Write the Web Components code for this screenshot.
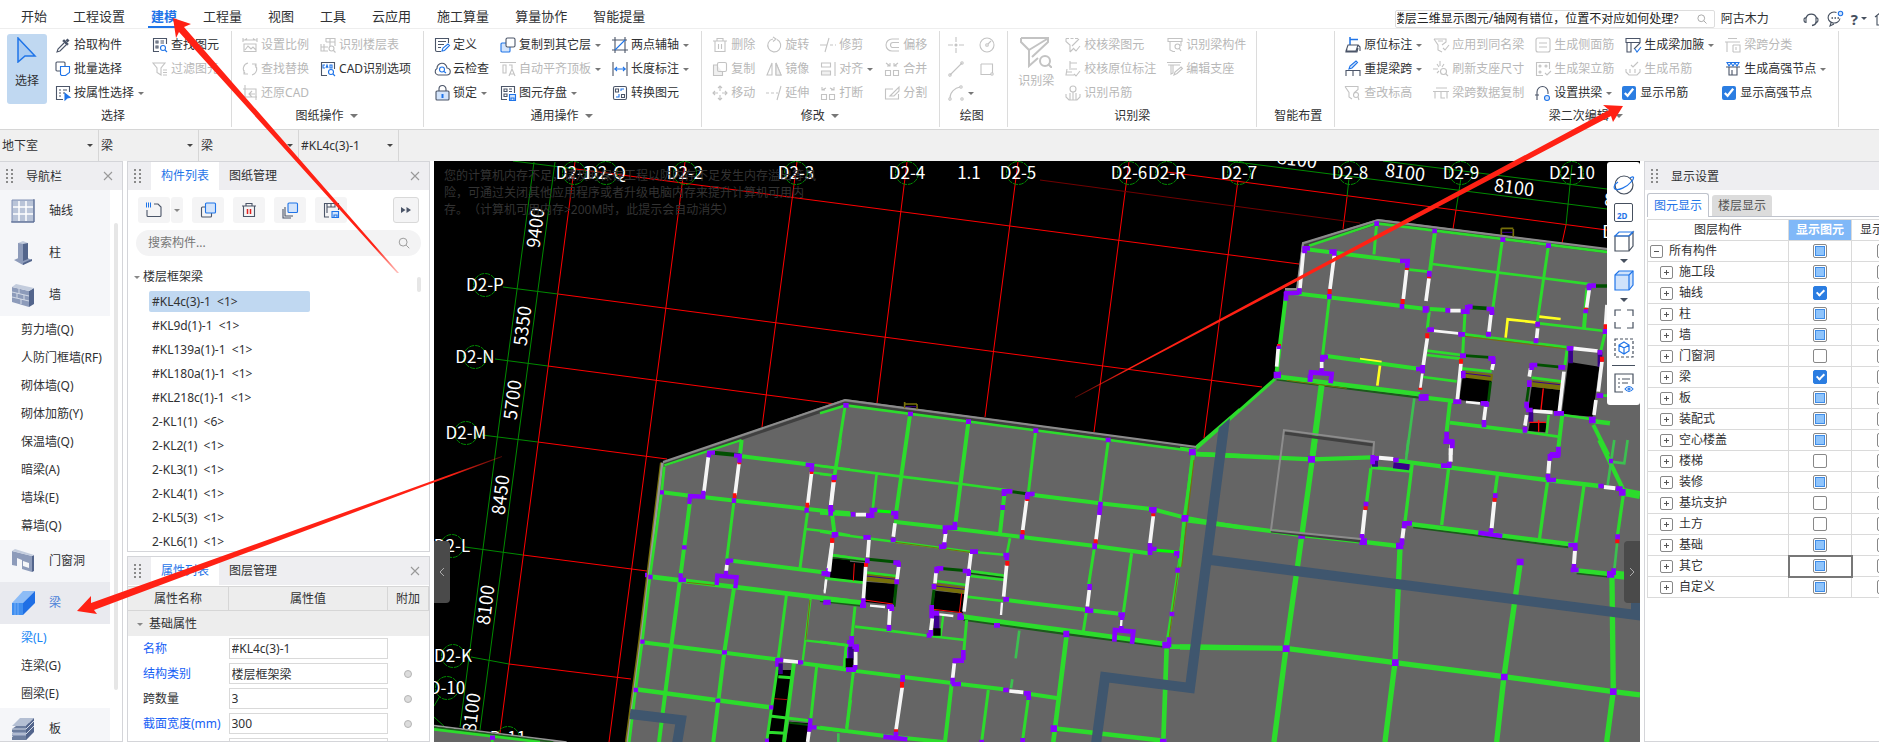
<!DOCTYPE html>
<html lang="zh-CN">
<head>
<meta charset="utf-8">
<title>建模</title>
<style>
  html, body {
    height: 100%;
    margin: 0;
  }

  body {
    background: #fff;
    color: #303133;
    font: 12px/16px "Noto Sans", "Noto Sans CJK SC", sans-serif;
    overflow: hidden;
  }
</style>
</head>
<body>
<model-app></model-app>

<script>
// app-icon.js

// 16x16 line icons, class "a" takes the accent colour, "f" a light fill
const ICONS = {
  picker: '<path fill="currentColor" d="M9 3l4 4-1 1-4-4z"/><path stroke-width="3" d="M11.500 4.500l2-2"/><path d="M9 6l-6 6-1 3 3-1 6-6"/>',
  batch: '<rect x="1" y="1" width="9" height="9" rx="1"/><path class="a" fill="#fff" d="M5.500 5.500h9v6l-4 3h-4l-1-1z"/>',
  byattr: '<path d="M8 14.500H1.500v-13h13V7M4 5h2M8 5h4M4 8h2M8 8h2M4 11h2"/><path class="a" fill="var(--accent, #1f74e8)" d="M10 8.500l5 4-3 .5-2 2z"/>',
  find: '<path d="M7 14.500H1.500v-13h13V7M4 4h2v2H4zM4 9h2v2H4zM8.500 4H12M8.500 6H12"/><circle class="a" cx="11" cy="11" r="2.500"/><path class="a" d="M13 13l2 2"/>',
  filter: '<path d="M1 2h12L9 7v7l-4-2.500V7zM11 9h4M11 11.500h4M11 14h4"/>',
  scale: '<path d="M1 1v4M15 1v4M1 3h14M3 3l2-1.500M13 3l-2-1.500M2 7h12v7.500H2zM3 13l3-4 3 3 2-2 3 3"/>',
  swap: '<path d="M6 2a6 6 0 0 0-3 10M2 9v4h4M10 14a6 6 0 0 0 3-10M14 7V3h-4"/>',
  cadback: '<path d="M3 0v12h12M1 4h13v8M14 12v3M10 6L7 9l3 3M7 9h6"/>',
  floors: '<path d="M6 5V1.500h9V9M6 5h9M10 1.500V9M1 7v7h7M4 7v7M1 10h7"/><circle cx="11.500" cy="11.500" r="2.500"/><path d="M13.500 13.500l2 2"/>',
  cad: '<path d="M7 14.500H1.500v-13h13V8"/><path class="a" d="M5 4H3v3h2M6 7l1-3 1 3M10 4v3h2V4z"/><circle class="a" cx="11" cy="11" r="2.500"/><path class="a" d="M13 13l2 2"/>',
  define: '<path d="M7 14.500H3a1.500 1.500 0 0 1-1.500-1.500V1.500h13V6M4 4.500h8M4 7.500h6M4 10.500h3"/><path class="a" d="M8 14l1-3 5-4 1.500 1.500-5 5z"/>',
  cloud: '<path d="M4 14a3.500 3.500 0 0 1-1-6.500A5 5 0 0 1 13 7a3.500 3.500 0 0 1-.5 7z"/><circle class="a" cx="8" cy="8.500" r="2.500"/><path class="a" d="M10 10.500l2 1.500"/>',
  lock: '<rect class="f" x="2" y="6" width="13" height="9" rx="1"/><path d="M5 6V4a3.500 3.500 0 0 1 7 0v2"/><path class="a" stroke-width="2" d="M8.500 9v4"/>',
  copyto: '<rect class="a f" x="1" y="6" width="9" height="9" rx="1"/><rect x="6" y="1" width="9" height="9" rx="1.500" fill="#fff"/>',
  alignslab: '<path d="M0 1.500h16M3 4h3v8H3zM9 4h3v3"/><path d="M9 15l3-7 3 7M10 13h4"/>',
  store: '<path d="M7 14.500H1.500v-13h13V8M4 4h3v2.500H4zM4 9h3v2.500H4zM9 4h3M9 6.500h3"/><path class="a f" d="M9.500 9.500h6v6h-6zM11 15v-2h3v2"/>',
  axis: '<path d="M3 0v16M0 3h15M13 0v16M0 13h16"/><path class="a" d="M3 13L13 3"/>',
  dim: '<path d="M1 1v14M15 1v14"/><path class="a" d="M2 8h12M5 6L3 8l2 2M11 6l2 2-2 2"/>',
  convert: '<rect x="1.500" y="1.500" width="13" height="13" rx="1.500"/><path d="M3.500 4h3v3h-3zM9.500 9.500h3v3h-3z"/><path class="a" d="M12 4H9v2M4 12h3v-3"/>',
  trash: '<path d="M1 4h14M5 4V1.500h6V4M3 4v10.500h10V4M6.500 7v5M9.500 7v5"/>',
  copy: '<path class="f" d="M5 4H1.500v10.500h9V11"/><rect x="5.500" y="1.500" width="9" height="9" rx="1.500"/>',
  move: '<path d="M8 1v5M8 10v5M1 8h5M10 8h5M6 3l2-2 2 2M6 13l2 2 2-2M3 6L1 8l2 2M13 6l2 2-2 2"/>',
  rotate: '<path d="M7 2a6.500 6.500 0 1 0 4 .5M7 0l3 2-3 2.500"/>',
  mirror: '<path d="M6 2v12H1zM10 2l5 12h-5z"/><path class="f" d="M10 2l5 12h-5z"/>',
  extend: '<path stroke-dasharray="3 2" d="M0 8h10"/><path d="M10 8h2M15 1l-4 14"/>',
  trim: '<path d="M0 8h7M9 1L5 15"/><path stroke-dasharray="3 2" d="M10 8h6"/>',
  align: '<path d="M15 1v14M1.500 2h9v4h-9z"/><path class="f" d="M1.500 10h9v4h-9z"/>',
  split: '<path d="M1.500 9.500h5v5h-5zM9.500 9.500h5v5h-5zM6 3L2 5M2 2v3h3M10 3l4 2M14 2v3h-3"/>',
  offset: '<path d="M15 2H8a6 6 0 0 0 0 12h7M15 5.500H9a2.500 2.500 0 0 0 0 5h6"/>',
  merge: '<path d="M1.500 9.500h5v5h-5zM9.500 9.500h5v5h-5zM2 2l4 3M6 2v3H3M14 2l-4 3M10 2v3h3"/>',
  cut: '<path d="M9 4H1.500v10h13V9M6 11l9-9v4l-5 5z"/>',
  point: '<path d="M8 0v5M8 11v5M0 8h5M11 8h5"/><circle cx="8" cy="8" r="1" fill="currentColor"/>',
  line: '<path d="M2 14L14 2"/><circle cx="2" cy="14" r="1.200"/><circle cx="14" cy="2" r="1.200"/>',
  arc: '<path d="M2 13C2 7 7 3 12 2"/><circle cx="2" cy="14" r="1.200"/><circle cx="13" cy="2" r="1.200"/><circle cx="14" cy="14" r="1.200"/>',
  circle: '<circle cx="8" cy="8" r="7"/><circle cx="8" cy="8" r="1.300"/><path d="M9 7l3-3"/>',
  rect: '<path d="M2 3h11.500v9M12 13.500H2V3"/><circle cx="13" cy="13" r="1.200"/>',
  chkbeam: '<path stroke-dasharray="3 1.500" d="M1 1.500h13"/><path d="M1 1.500v3L5 8v7M14 2L7 9M5 15l4-4M9 12l2 2 4-5"/>',
  chkpos: '<path d="M5 0v7M5 2h7M4 8h8M2 8l-1 6h8M9 13l2 2 4-5M1 11h6"/>',
  hang: '<circle cx="8" cy="4" r="3"/><path d="M8 7v8M1 9v3l3 3h8l3-3V9M5 8v7M11 8v7"/>',
  beamid: '<path d="M1 1.500h14v3H1zM3 4v9l3 1.500h2"/><circle cx="10.500" cy="9.500" r="2.500"/><path d="M12 11l2 3M14 5v4"/>',
  support: '<path d="M0 1.500h14M1 4h12M4 4v9l2-1V4"/><path d="M7 14l1-3 6-5 1.500 1.500-5.500 5z"/>',
  orig: '<path class="a" stroke-width="1.500" d="M5 0v8M5 2.500h8"/><path d="M3 8h10l-2 6H1zM13 8l2 2v4M2 12l-1 3h11l1-4"/>',
  respan: '<path class="a f" d="M4 8l1-3 6-5 1.500 1.500L7 7z"/><path d="M1 15V9.500h14V15M8 9.500V15"/>',
  chkh: '<path d="M0 1.500h13v3L9 8M0 1.500l4 6V12l3 2"/><circle cx="11" cy="10" r="2.500"/><path d="M13 12l1 3"/>',
  apply: '<path d="M1 2h12v3l-4 3M1 2l4 6v5l4 2M5 4h5M10 11l2 2 4-5"/>',
  refresh: '<path d="M0 8h5M7 0v5M4 3l2 3M11 3L9 6"/><circle cx="10.500" cy="10.500" r="3"/><path d="M13 13l2 2M4 12l2-2"/>',
  spancopy: '<path d="M3 3h11M0 6.500h16M2 6.500v7M8 6.500v7M14 6.500v7M8 13h4"/>',
  side: '<rect x="1" y="1" width="14" height="14" rx="2"/><path d="M4 6h8M4 10h8"/>',
  erect: '<path d="M8 14.500H1.500v-13h13V8"/><circle cx="5" cy="5" r="1"/><circle cx="11" cy="5" r="1"/><circle cx="5" cy="11" r="1"/><path d="M10 12l2 2 4-4"/>',
  arch: '<path d="M2 15V7a5.500 5.500 0 0 1 11 0v2M0 10h4"/><circle class="a f" cx="12" cy="13" r="2.500"/>',
  haunch: '<path d="M1 1.500h14v4H1zM2 6v9h4V6M15 6L9 12"/><path class="a" d="M10 12l2 3 4-5"/>',
  genhang: '<path d="M1 8v3l3 3h8l3-3V8M5 8v4M10 8v4M6 4l2 2 5-5"/>',
  classify: '<path d="M3 1.500h9M0 5h15M2 5v10M8 8v7M8 8h7v7H8M11 10v3"/>',
  strong: '<path d="M1 6h14M4 6v8h8V6M7 9v5"/><path class="a" d="M2 1.500h12L12 5 10 2 8 5 6 2 4 5z"/>',
  search: '<circle cx="7" cy="7" r="4.500"/><path d="M10.500 10.500L14 14"/>',
  headset: '<path stroke-width="1.300" d="M3 7a5.500 5.500 0 0 1 10.500 0M13.500 11q-1 3-4.500 3.500"/><path d="M3 7v4.500q-2 0-2-2.500t2-2M13 7v4.500q2 0 2-2.500t-2-2"/>',
  smile: '<path d="M9.500 1.500A6 5.500 0 1 0 13 7.500M4 12l-1 3 4-2"/><circle class="a f" cx="13.500" cy="2.500" r="2.200"/><path stroke-width="1.500" d="M4.500 7H6M7.500 7H9M10.500 7H12"/>',
  home: '<path d="M0 6l5-4 5 4M2 5v9h8"/>',
  newfile: '<path d="M8 2h4l3 3v8.500q0 1-1 1H2q-1 0-1-1V8"/><path class="a" stroke-width="5" stroke-dasharray="1 1" d="M0 3h5"/>',
  dup: '<path d="M5 5H2.500q-1 0-1 1v8q0 1 1 1h8q1 0 1-1v-3"/><rect class="a f" x="5.500" y="1" width="10" height="10" rx="1"/>',
  del: '<path d="M1 4h14M5 4V1.500h6V4M2.500 4v10.500h11V4"/><path stroke="#e02020" stroke-width="1.500" d="M6.500 7v5M9.500 7v5"/>',
  layers: '<path d="M3 5v9h8M1 7v9h8"/><rect class="a f" x="6" y="1" width="9.500" height="9.500" rx="1"/>',
  save: '<path d="M6 15H1.500V1.500h14V8M4 1.500V11M4 5h8V2M8 5V2"/><path class="a f" d="M9 9.500h6.500v6H9zM11 15v-2h3v2"/>',
  more: '<path fill="currentColor" stroke="none" d="M3 5l4.500 3L3 11zM8.500 5L13 8l-4.500 3z"/>',
  close: '<path d="M4 4l8 8M12 4l-8 8"/>'
};

class AppIcon extends HTMLElement {
  connectedCallback() {
    var name = this.getAttribute("name");
    this.attachShadow({ mode: "open" });
    this.shadowRoot.innerHTML = `
      <svg viewBox="0 0 16 16" aria-hidden="true">${ICONS[name]}</svg>
      <style>
        :host {
          display: block;
          flex: none;
          height: 16px;
          width: 16px;
        }

        svg {
          display: block;
          fill: none;
          height: 100%;
          overflow: visible;
          stroke: currentColor;
          stroke-width: 1.1;
          width: 100%;
        }

        .a {
          stroke: var(--accent, #1f74e8);
        }

        .f {
          fill: var(--soft, #d3e4fb);
        }
      </style>
    `;
  }
}

customElements.define("app-icon", AppIcon);

// menu-bar.js

class MenuBar extends HTMLElement {
  connectedCallback() {
    var items = ["开始", "工程设置", "建模", "工程量", "视图", "工具", "云应用", "施工算量", "算量协作", "智能提量"];
    this.attachShadow({ mode: "open" });
    this.shadowRoot.innerHTML = `
      <nav>
        ${items.map((t) => `<a href="#"${t == "建模" ? ' class="on"' : ""}>${t}</a>`).join("")}
      </nav>
      <div class="right">
        <label class="find">
          <input aria-label="搜索" value="楼层三维显示图元/轴网有错位，位置不对应如何处理?">
          <app-icon name="search"></app-icon>
        </label>
        <span class="user">阿古木力</span>
        <button aria-label="客服"><app-icon name="headset"></app-icon></button>
        <button aria-label="反馈"><app-icon name="smile"></app-icon></button>
        <button class="help">?<i></i></button>
        <app-icon class="last" name="home"></app-icon>
      </div>
      <style>
        :host {
          border-bottom: 1px solid #eee;
          display: flex;
          flex: none;
          height: 28px;
          justify-content: space-between;
          overflow: hidden;
        }

        nav {
          display: flex;
          font-size: 13px;
          gap: 20px;
          padding-left: 18px;
        }

        a {
          border-bottom: 2px solid transparent;
          box-sizing: border-box;
          color: #303133;
          height: 28px;
          line-height: 20px;
          padding: 6px 3px 0;
          text-decoration: none;
        }

        .on {
          border-color: #1f74e8;
          color: #1f74e8;
          font-weight: bold;
        }

        .right {
          align-items: center;
          color: #46505f;
          display: flex;
          gap: 8px;
          padding-top: 9px;
        }

        .find {
          align-items: center;
          border: 1px solid #ddd;
          border-radius: 2px;
          box-sizing: border-box;
          color: #999;
          display: flex;
          height: 18px;
          padding-right: 6px;
          width: 320px;
        }

        input {
          background: none;
          border: 0;
          color: #222;
          flex: 1;
          font: inherit;
          height: 16px;
          min-width: 0;
          outline: none;
          padding: 0 0 0 1px;
          text-indent: -4px;
        }

        .find app-icon {
          height: 12px;
          width: 12px;
        }

        .user {
          color: #303133;
          margin: 0 26px 0 -2px;
        }

        button {
          background: none;
          border: 0;
          color: inherit;
          display: flex;
          font: inherit;
          padding: 0;
        }

        .help {
          align-items: center;
          font-size: 15px;
          font-weight: bold;
          gap: 3px;
        }

        i {
          border: 3px solid transparent;
          border-bottom: 0;
          border-top-color: #46505f;
        }

        .last {
          margin-right: -12px;
        }
      </style>
    `;
  }
}

customElements.define("menu-bar", MenuBar);

// tool-button.js

class ToolButton extends HTMLElement {
  connectedCallback() {
    var icon = this.getAttribute("icon");
    var off = this.hasAttribute("off") ? "disabled" : "";
    this.attachShadow({ mode: "open" });
    this.shadowRoot.innerHTML = `
      <button ${off} aria-label="${this.textContent || icon}">
        <app-icon name="${icon}"></app-icon>
        <slot></slot>
        ${this.hasAttribute("menu") ? "<i></i>" : ""}
      </button>
      <style>
        :host {
          display: flex;
          height: 24px;
          white-space: nowrap;
        }

        button {
          align-items: center;
          background: none;
          border: 0;
          color: #303133;
          display: flex;
          font: inherit;
          gap: 3px;
          padding: 0;
        }

        button:disabled {
          --accent: #c3c3c3;
          --soft: #f0f0f0;
          color: #b8b8b8;
        }

        app-icon {
          color: #4b5568;
        }

        button:disabled app-icon {
          color: #c3c3c3;
        }

        i {
          border: 3px solid transparent;
          border-bottom: 0;
          border-top-color: #777;
          margin-left: 1px;
        }
      </style>
    `;
  }
}

customElements.define("tool-button", ToolButton);

// tool-check.js

class ToolCheck extends HTMLElement {
  connectedCallback() {
    this.attachShadow({ mode: "open" });
    this.shadowRoot.innerHTML = `
      <label><input type="checkbox" checked><slot></slot></label>
      <style>
        :host {
          display: flex;
          height: 24px;
          margin-left: -3px;
          white-space: nowrap;
        }

        label {
          align-items: center;
          display: flex;
          gap: 4px;
        }

        input {
          accent-color: #2b7de1;
          height: 14px;
          margin: 0;
          width: 14px;
        }
      </style>
    `;
  }
}

customElements.define("tool-check", ToolCheck);

// ribbon-group.js

class RibbonGroup extends HTMLElement {
  connectedCallback() {
    var label = this.getAttribute("label");
    this.attachShadow({ mode: "open" });
    this.shadowRoot.innerHTML = `
      <div class="tools"><slot></slot></div>
      <div class="label">${label}${this.hasAttribute("menu") ? "<i></i>" : ""}</div>
      <style>
        :host {
          border-right: 1px solid #dcdcdc;
          display: flex;
          flex-direction: column;
          padding: 2px var(--end, 12px) 0 var(--start, 10px);
        }

        .tools {
          display: flex;
          gap: var(--gap, 11px);
          height: 72px;
        }

        .label {
          align-items: center;
          display: flex;
          gap: 6px;
          height: 22px;
          justify-content: center;
          white-space: nowrap;
        }

        i {
          border: 4px solid transparent;
          border-bottom: 0;
          border-top-color: #777;
        }

        ::slotted(div) {
          display: flex;
          flex-direction: column;
        }
      </style>
    `;
  }
}

customElements.define("ribbon-group", RibbonGroup);

// big-button.js

class BigButton extends HTMLElement {
  connectedCallback() {
    var on = this.hasAttribute("on");
    this.attachShadow({ mode: "open" });
    this.shadowRoot.innerHTML = `
      <button class="${on ? "on" : "off"}">
        ${on
          ? '<svg viewBox="0 0 20 26" width="20" height="26"><path fill="#a9cbf2" stroke="#1f74e8" stroke-width="1.500" d="M1 1v24l7-6h10z"/></svg>'
          : '<svg viewBox="0 0 32 32" width="32" height="32"><path fill="none" stroke="#c3c3c3" stroke-width="2" d="M1 2h27v4L12 21M1 2v4l8 8v16l9-8M9 14l18-11"/><circle cx="25" cy="25" r="5" fill="#fff" stroke="#c3c3c3" stroke-width="2"/><path stroke="#c3c3c3" stroke-width="2" d="M28 28l4 4"/></svg>'}
        <slot></slot>
      </button>
      <style>
        :host {
          display: block;
        }

        button {
          align-items: center;
          background: none;
          border: 0;
          border-radius: 3px;
          box-sizing: border-box;
          color: #b8b8b8;
          display: flex;
          flex-direction: column;
          font: inherit;
          gap: 10px;
          height: 70px;
          margin-top: 1px;
          padding: 2px 0 0;
        }

        .off {
          gap: 5px;
        }

        .on {
          background: #c0d8f1;
          color: #303133;
          padding: 3px 8px 0;
        }
      </style>
    `;
  }
}

customElements.define("big-button", BigButton);

// ribbon-bar.js

class RibbonBar extends HTMLElement {
  connectedCallback() {
    this.attachShadow({ mode: "open" });
    this.shadowRoot.innerHTML = `
      <ribbon-group label="选择" style="--start:7px;--gap:8px">
        <big-button on>选择</big-button>
        <div>
          <tool-button icon="picker">拾取构件</tool-button>
          <tool-button icon="batch">批量选择</tool-button>
          <tool-button icon="byattr" menu>按属性选择</tool-button>
        </div>
        <div>
          <tool-button icon="find">查找图元</tool-button>
          <tool-button icon="filter" off>过滤图元</tool-button>
        </div>
      </ribbon-group>
      <ribbon-group label="图纸操作" menu>
        <div>
          <tool-button icon="scale" off>设置比例</tool-button>
          <tool-button icon="swap" off>查找替换</tool-button>
          <tool-button icon="cadback" off>还原CAD</tool-button>
        </div>
        <div>
          <tool-button icon="floors" off>识别楼层表</tool-button>
          <tool-button icon="cad">CAD识别选项</tool-button>
        </div>
      </ribbon-group>
      <ribbon-group label="通用操作" menu>
        <div>
          <tool-button icon="define">定义</tool-button>
          <tool-button icon="cloud">云检查</tool-button>
          <tool-button icon="lock" menu>锁定</tool-button>
        </div>
        <div>
          <tool-button icon="copyto" menu>复制到其它层</tool-button>
          <tool-button icon="alignslab" off menu>自动平齐顶板</tool-button>
          <tool-button icon="store" menu>图元存盘</tool-button>
        </div>
        <div>
          <tool-button icon="axis" menu>两点辅轴</tool-button>
          <tool-button icon="dim" menu>长度标注</tool-button>
          <tool-button icon="convert">转换图元</tool-button>
        </div>
      </ribbon-group>
      <ribbon-group label="修改" menu>
        <div>
          <tool-button icon="trash" off>删除</tool-button>
          <tool-button icon="copy" off>复制</tool-button>
          <tool-button icon="move" off>移动</tool-button>
        </div>
        <div>
          <tool-button icon="rotate" off>旋转</tool-button>
          <tool-button icon="mirror" off>镜像</tool-button>
          <tool-button icon="extend" off>延伸</tool-button>
        </div>
        <div>
          <tool-button icon="trim" off>修剪</tool-button>
          <tool-button icon="align" off menu>对齐</tool-button>
          <tool-button icon="split" off>打断</tool-button>
        </div>
        <div>
          <tool-button icon="offset" off>偏移</tool-button>
          <tool-button icon="merge" off>合并</tool-button>
          <tool-button icon="cut" off>分割</tool-button>
        </div>
      </ribbon-group>
      <ribbon-group label="绘图" style="--start:8px;--gap:5px">
        <div>
          <tool-button icon="point" off></tool-button>
          <tool-button icon="line" off></tool-button>
          <tool-button icon="arc" off menu></tool-button>
        </div>
        <div>
          <tool-button icon="circle" off></tool-button>
          <tool-button icon="rect" off></tool-button>
        </div>
      </ribbon-group>
      <ribbon-group label="识别梁" style="--end:10px">
        <big-button>识别梁</big-button>
        <div>
          <tool-button icon="chkbeam" off>校核梁图元</tool-button>
          <tool-button icon="chkpos" off>校核原位标注</tool-button>
          <tool-button icon="hang" off>识别吊筋</tool-button>
        </div>
        <div>
          <tool-button icon="beamid" off>识别梁构件</tool-button>
          <tool-button icon="support" off>编辑支座</tool-button>
        </div>
      </ribbon-group>
      <ribbon-group label="智能布置" style="--start:17px"></ribbon-group>
      <ribbon-group label="梁二次编辑" menu>
        <div>
          <tool-button icon="orig" menu>原位标注</tool-button>
          <tool-button icon="respan" menu>重提梁跨</tool-button>
          <tool-button icon="chkh" off>查改标高</tool-button>
        </div>
        <div>
          <tool-button icon="apply" off>应用到同名梁</tool-button>
          <tool-button icon="refresh" off>刷新支座尺寸</tool-button>
          <tool-button icon="spancopy" off>梁跨数据复制</tool-button>
        </div>
        <div>
          <tool-button icon="side" off>生成侧面筋</tool-button>
          <tool-button icon="erect" off>生成架立筋</tool-button>
          <tool-button icon="arch" menu>设置拱梁</tool-button>
        </div>
        <div>
          <tool-button icon="haunch" menu>生成梁加腋</tool-button>
          <tool-button icon="genhang" off>生成吊筋</tool-button>
          <tool-check>显示吊筋</tool-check>
        </div>
        <div>
          <tool-button icon="classify" off>梁跨分类</tool-button>
          <tool-button icon="strong" menu>生成高强节点</tool-button>
          <tool-check>显示高强节点</tool-check>
        </div>
      </ribbon-group>
      <style>
        :host {
          border-bottom: 1px solid #d6d6d6;
          display: flex;
          flex: none;
          padding: 2px 0;
        }
      </style>
    `;
  }
}

customElements.define("ribbon-bar", RibbonBar);

// filter-bar.js

class FilterBar extends HTMLElement {
  connectedCallback() {
    var fields = [["楼层", "地下室"], ["分类", "梁"], ["类型", "梁"], ["构件", "#KL4c(3)-1"]];
    this.attachShadow({ mode: "open" });
    this.shadowRoot.innerHTML = `
      ${fields.map(([name, value]) => `
        <label><select aria-label="${name}"><option>${value}</option></select></label>
      `).join("")}
      <style>
        :host {
          background: #f0f0f0;
          display: flex;
          flex: none;
          height: 31px;
        }

        label {
          align-items: center;
          border-right: 1px solid #d6d6d6;
          box-sizing: border-box;
          display: flex;
          position: relative;
          width: 100px;
        }

        label:first-child {
          width: 99px;
        }

        select {
          appearance: none;
          background: none;
          border: 0;
          color: #303133;
          font: inherit;
          height: 30px;
          outline: none;
          padding: 0 2px;
          width: 100%;
        }

        label::after {
          border: 3px solid transparent;
          border-bottom: 0;
          border-top-color: #444;
          content: "";
          position: absolute;
          right: 5px;
        }
      </style>
    `;
  }
}

customElements.define("filter-bar", FilterBar);

// dock-panel.js

class DockPanel extends HTMLElement {
  connectedCallback() {
    var title = this.getAttribute("title");
    var tabs = (this.getAttribute("tabs") || "").split(",").filter(Boolean);
    this.removeAttribute("title");
    this.attachShadow({ mode: "open" });
    this.shadowRoot.innerHTML = `
      <header>
        <svg width="7" height="14" aria-hidden="true"><path d="M1 0v14M6 0v14" stroke="#8a8a8a" stroke-width="2" stroke-dasharray="2 2"/></svg>
        ${title ? `<span>${title}</span>` : ""}
        ${tabs.map((t, i) => `<button class="tab${i ? "" : " on"}">${t}</button>`).join("")}
        ${this.hasAttribute("fixed") ? "" : '<button class="close" aria-label="关闭"><app-icon name="close"></app-icon></button>'}
      </header>
      <slot></slot>
      <style>
        :host {
          background: #fff;
          border: 1px solid #d4d5d9;
          box-sizing: border-box;
          display: flex;
          flex-direction: column;
          min-height: 0;
          overflow: hidden;
        }

        header {
          background: #eeeef1;
          display: flex;
          flex: none;
          height: 28px;
        }

        svg {
          align-self: center;
          margin: 0 10px 0 6px;
        }

        span {
          line-height: 29px;
          padding-left: 3px;
        }

        button {
          background: none;
          border: 0;
          color: #303133;
          font: inherit;
          padding: 0 10px;
        }

        .on {
          background: #fff;
          color: #1f74e8;
        }

        .close {
          color: #999;
          margin-left: auto;
          padding: 0 6px;
        }
      </style>
    `;
  }
}

customElements.define("dock-panel", DockPanel);

// nav-list.js

const NAV_ART = {
  轴线: '<path fill="#b9c4d8" stroke="#8292b5" d="M1 1h22v22H1z"/><path stroke="#fff" stroke-width="1.500" d="M8 2v20M15 2v20M2 8h20M2 15h20"/><path fill="none" stroke="#54678f" d="M23 0v23H0"/>',
  柱: '<path fill="#8d9bba" d="M3 19l9-4 9 4-9 5z"/><path fill="#53658c" d="M12 24v-2l9-4v2z"/><path fill="#8d9bba" d="M7 2h5v18l-5-2z"/><path fill="#53658c" d="M12 2h5v16l-5 2z"/><path fill="#c3ccdd" d="M7 2l5-2 5 2-5 1z"/>',
  墙: '<path fill="#8d9bba" d="M1 4l17 4v16L1 19z"/><path fill="#53658c" d="M18 8l5-3v16l-5 3z"/><path fill="#c3ccdd" d="M1 4l4-3 18 4-5 3z"/><path fill="none" stroke="#d3dae6" d="M1 9l17 4M1 14l17 4M8 6v5M13 12v5M6 10v5M10 16v5"/>',
  门窗洞: '<path fill="#8d9bba" fill-rule="evenodd" d="M1 2l20 5v16l-10-3v-9L6 9v8l-5-1zM12 12v5l6 2v-5z"/><path fill="#53658c" d="M21 7l2-1v16l-2 1z"/><path fill="#c3ccdd" d="M1 2l3-2 19 6-2 1z"/>',
  梁: '<path fill="#3f8ef0" d="M1 12h11v12H1z"/><path fill="#8dbcf6" d="M1 12L12 0h12L12 12z"/><path fill="#1f6fe5" d="M12 12L24 0v12L12 24z"/><path stroke="#79aff5" d="M4 12v12M7 12v12"/>',
  板: '<path fill="#6d7e9f" d="M1 20l8-6h14l-8 9H1z"/><path fill="#8d9bba" d="M1 16l8-6h14l-8 9H1z"/><path fill="#6d7e9f" d="M1 12l8-6h14l-8 9H1z"/><path fill="#b4bfd3" d="M1 9l8-8h14l-8 8z"/><path fill="#53658c" d="M15 9l8-8v14l-8 8z"/><path stroke="#d3dae6" fill="none" d="M1 12h14l8-8M1 17h14l8-8"/>'
};

class NavList extends HTMLElement {
  connectedCallback() {
    var groups = [
      ["轴线"],
      ["柱"],
      ["墙", "剪力墙(Q)", "人防门框墙(RF)", "砌体墙(Q)", "砌体加筋(Y)", "保温墙(Q)", "暗梁(A)", "墙垛(E)", "幕墙(Q)"],
      ["门窗洞"],
      ["梁", "梁(L)", "连梁(G)", "圈梁(E)"],
      ["板"]
    ];
    this.attachShadow({ mode: "open" });
    this.shadowRoot.innerHTML = `
      <div class="list">
        ${groups.map(([name, ...subs]) => `
          <button class="group${name == "梁" ? " on" : ""}">
            <svg viewBox="0 0 24 24" width="24" height="24" fill="none">${NAV_ART[name]}</svg>${name}
          </button>
          ${subs.map((s) => `<a href="#"${s == "梁(L)" ? ' class="on"' : ""}>${s}</a>`).join("")}
        `).join("")}
      </div>
      <div class="bar"></div>
      <style>
        :host {
          display: flex;
          flex: 1;
          min-height: 0;
        }

        .list {
          display: flex;
          flex: 1;
          flex-direction: column;
          overflow: hidden;
        }

        .group {
          align-items: center;
          background: #f5f6f9;
          border: 0;
          color: #303133;
          display: flex;
          flex: none;
          font: inherit;
          gap: 14px;
          height: 42px;
          padding: 0 11px;
          text-align: left;
        }

        .group.on {
          background: #e9eaef;
          color: #4a7fd8;
        }

        a {
          color: #303133;
          flex: none;
          line-height: 28px;
          padding-left: 21px;
          text-decoration: none;
          white-space: nowrap;
        }

        a.on {
          color: #1585f5;
        }

        .bar {
          background: #e6e6e6;
          border-radius: 2px;
          margin: 33px 4px 51px;
          width: 4px;
        }
      </style>
    `;
  }
}

customElements.define("nav-list", NavList);

// component-list.js

class ComponentList extends HTMLElement {
  connectedCallback() {
    var items = ["#KL4c(3)-1", "#KL9d(1)-1", "#KL139a(1)-1", "#KL180a(1)-1", "#KL218c(1)-1",
      "2-KL1(1)", "2-KL2(1)", "2-KL3(1)", "2-KL4(1)", "2-KL5(3)", "2-KL6(1)"];
    this.attachShadow({ mode: "open" });
    this.shadowRoot.innerHTML = `
      <div class="tools">
        <span class="pair">
          <button aria-label="新建"><app-icon name="newfile"></app-icon></button>
          <button class="drop" aria-label="更多新建"><i></i></button>
        </span>
        <button aria-label="复制"><app-icon name="dup"></app-icon></button>
        <button aria-label="删除"><app-icon name="del"></app-icon></button>
        <button aria-label="层间复制"><app-icon name="layers"></app-icon></button>
        <button aria-label="存档"><app-icon name="save"></app-icon></button>
        <button class="more" aria-label="更多"><app-icon name="more"></app-icon></button>
      </div>
      <label class="find">
        <input type="text" aria-label="搜索构件" placeholder="搜索构件...">
        <app-icon name="search"></app-icon>
      </label>
      <div class="tree">
        <div class="root"><i></i>楼层框架梁</div>
        <ul>
          ${items.map((t, i) => `<li${i ? "" : ' class="on"'}>${t}&nbsp; &lt;${i == 5 ? 6 : 1}&gt;</li>`).join("")}
        </ul>
      </div>
      <style>
        :host {
          display: flex;
          flex: 1;
          flex-direction: column;
          min-height: 0;
          padding: 7px 8px 0;
        }

        .tools {
          display: flex;
          flex: none;
          gap: 9px;
          padding: 0 2px;
        }

        .pair {
          display: flex;
          gap: 1px;
        }

        button {
          align-items: center;
          background: #f4f4f5;
          border: 0;
          border-radius: 3px;
          color: #4b5568;
          display: flex;
          height: 26px;
          justify-content: center;
          padding: 0;
          width: 32px;
        }

        .drop {
          width: 12px;
        }

        .more {
          border: 1px solid #d9d9d9;
          margin-left: auto;
          width: 26px;
        }

        i {
          border: 3px solid transparent;
          border-bottom: 0;
          border-top-color: #888;
        }

        .find {
          align-items: center;
          background: #f3f3f4;
          border-radius: 13px;
          color: #999;
          display: flex;
          flex: none;
          height: 26px;
          margin-top: 7px;
          padding: 0 10px 0 12px;
        }

        .find app-icon {
          height: 14px;
          width: 14px;
        }

        input {
          background: none;
          border: 0;
          flex: 1;
          font: inherit;
          min-width: 0;
          outline: none;
          padding: 0;
        }

        input::placeholder {
          color: #777;
        }

        .tree {
          flex: none;
          margin-top: 9px;
          position: relative;
        }

        .root {
          align-items: center;
          display: flex;
          gap: 3px;
          height: 24px;
          margin-left: -2px;
        }

        ul {
          list-style: none;
          margin: 0;
          padding: 0 0 0 13px;
        }

        li {
          border-radius: 2px;
          line-height: 21px;
          margin: 2px 0 3px;
          padding-left: 3px;
          width: 158px;
        }

        .on {
          background: #c0d8f1;
        }

        .tree::after {
          background: #e6e6e6;
          border-radius: 2px;
          content: "";
          height: 15px;
          position: absolute;
          right: 0;
          top: 12px;
          width: 4px;
        }
      </style>
    `;
  }
}

customElements.define("component-list", ComponentList);

// property-grid.js

class PropertyGrid extends HTMLElement {
  connectedCallback() {
    var rows = [["名称", "#KL4c(3)-1", 1], ["结构类别", "楼层框架梁", 1], ["跨数量", "3", 0], ["截面宽度(mm)", "300", 1], ["", "", 0]];
    this.attachShadow({ mode: "open" });
    this.shadowRoot.innerHTML = `
      <table>
        <thead><tr><th class="name">属性名称</th><th>属性值</th><th class="add">附加</th></tr></thead>
        <tbody>
          <tr class="section"><td colspan="3"><i></i>基础属性</td></tr>
          ${rows.map(([name, value, blue], n) => `
            <tr>
              <td class="key${blue ? " blue" : ""}"><label for="p${n}">${name}</label></td>
              <td class="val"><input id="p${n}" type="text" value="${value}"></td>
              <td class="dot">${n && name ? '<input type="radio" aria-label="附加">' : ""}</td>
            </tr>
          `).join("")}
        </tbody>
      </table>
      <style>
        :host {
          display: block;
          padding-top: 1px;
        }

        table {
          border-collapse: collapse;
          table-layout: fixed;
          width: 100%;
        }

        th {
          background: #ededed;
          border: 1px solid #d6d6d6;
          border-left: 0;
          font-weight: normal;
          height: 23px;
          padding: 0;
        }

        .name {
          width: 100px;
        }

        .add {
          width: 40px;
        }

        td {
          height: 25px;
          padding: 0;
        }

        .section td {
          background: #ededed;
          padding-left: 9px;
        }

        i {
          border: 3px solid transparent;
          border-bottom: 0;
          border-top-color: #888;
          display: inline-block;
          margin-right: 6px;
          vertical-align: middle;
        }

        .key {
          padding-left: 15px;
          white-space: nowrap;
        }

        .blue {
          color: #1660f5;
        }

        .val input {
          border: 1px solid #d9d9d9;
          box-sizing: border-box;
          color: #303133;
          display: block;
          font: inherit;
          height: 21px;
          outline: none;
          padding: 0 2px;
          width: 100%;
        }

        .dot {
          text-align: center;
        }

        .dot input {
          appearance: none;
          background: #dcdcdc;
          border: 1px solid #b5b5b5;
          border-radius: 50%;
          height: 8px;
          margin: 0;
          width: 8px;
        }
      </style>
    `;
  }
}

customElements.define("property-grid", PropertyGrid);

// model-view.js

// axis bubbles: x, y, text
const BUBBLES = [
  [574, 173, "D2-1"], [606, 173, "D2-Q"], [685, 173, "D2-2"], [796, 173, "D2-3"], [907, 173, "D2-4"],
  [1018, 173, "D2-5"], [1129, 173, "D2-6"], [1167, 173, "D2-R"], [1239, 173, "D2-7"], [1350, 173, "D2-8"],
  [1461, 173, "D2-9"], [1572, 173, "D2-10"], [485, 285, "D2-P"], [475, 357, "D2-N"], [466, 433, "D2-M"],
  [452, 546, "D2-L"], [453, 656, "D2-K"], [447, 688, "D-10"], [508, 738, "D-11"]
];

// dimensions: x, y, angle, text
const DIMS = [
  [536, 228, -83, "9400"], [523, 326, -83, "5350"], [513, 400, -83, "5700"], [501, 495, -83, "8450"],
  [486, 605, -83, "8100"], [472, 713, -83, "8100"], [1297, 160, 7, "8100"], [1405, 173, 7, "8100"], [1514, 188, 7, "8100"]
];

// plan sheets, drawn at three units to the pixel: [class, width, path]
const SHEETS = [
  { x: 430, y: 440, parts: [
    ["o", 6, "M693 68L628 600L588 906"],
    ["e", 7, "M697 68L633 600L593 906"],
    ["g", 8, "M703 80L695 157L660 410L637 605L617 750L598 906"],
    ["k", 0, "M1040 690L1090 690L1062 906L1012 906zM1078 845L1137 850L1130 906L1068 906zM1205 355L1260 360V415L1200 410z"],
    ["g", 12, "M697 157L780 167M825 172L1205 215L1260 220M930 48L1150 75M935 0L930 45M780 185L752 405M905 362L1190 398M750 420L725 610L687 906M912 445L883 637L850 906M637 607L1040 658M1115 670L1260 688M1092 670L1062 906"],
    ["g", 14, "M660 410L1260 484M617 748L1020 802"],
    ["g", 9, "M912 185L890 360M1232 0L1215 105M1133 215L1110 385M1207 215L1215 280M1070 460L1045 655M1045 665L1010 906M1160 680L1140 860M1150 862L1260 875M1250 615L1243 680M1262 780L1250 870M1020 828L1140 842M1015 877L1065 880M1045 710L1085 713"],
    ["g", 7, "M703 76L935 0M1150 75L1260 88M1150 98L1215 106M1127 267L1215 277L1260 286M1142 475L1118 665M1130 602L1250 615M1205 345L1260 352M1205 415L1260 422"],
    ["o", 3, "M770 427L855 436M1140 480L1128 600"],
    ["d", 12, "M850 38L930 46"],
    ["d", 6, "M1078 848L1137 855"],
    ["r", 2, "M1033 776L1072 779"],
    ["w", 11, "M835 52L822 155M927 70L915 165M1145 97L1133 195M1212 125L1203 200M1207 305L1195 390M891 372L888 400M1060 662L1105 666M1137 875L1133 906"],
    ["w", 6, "M1188 415L1184 460"],
    ["r", 11, "M928 65v8M914 160v15M1145 94v8M1132 188v15M1212 118v8M1206 295v13"],
    ["p", 13, "M832 38L855 38M838 35L836 52M912 46L936 48M930 45L928 68M820 152L820 170L780 168L778 192M912 175v14M1127 74L1153 76M1146 72L1145 95M1130 203v15M1214 104v15M1194 215h20M1203 198v28M690 157h12M756 322h14M752 400L752 420L768 420M887 362L910 362M894 360L892 375M888 392V408M860 435L862 407L920 412L916 445M1175 399L1198 400M1195 385v25M1207 282h15M655 411h13M645 405h6M631 605h13M876 637h15M1037 660h22M1042 655v25M1104 667h16M1247 688h13M1258 600v60M611 750h13M856 782h15M1017 802h13M1142 835L1138 875M1138 862h22M1005 902h12M1180 488h22"],
    ["v", 13, "M1052 670v32"],
    ["f", 0, "M12 860L420 908H12z"],
    ["e", 5, "M12 857L410 906"],
    ["t", 5, "M12 862L370 906"],
    ["g", 8, "M12 868L330 906M187 892v14"],
    ["p", 13, "M180 893h15"]
  ] },
  { x: 820, y: 380, parts: [
    ["o", 5, "M254 85V66M291 88V72M254 72H291"],
    ["v", 3, "M256 80H290"],
    ["k", 0, "M38 540L135 550L130 605L30 595zM135 605L228 612L218 675L130 665zM345 632L437 642L428 700L338 690z"],
    ["g", 12, "M270 105L228 400M445 128L405 440M640 345L840 370L1000 388L1095 413L1200 432L1260 442M222 425L405 446L825 498L985 520M0 398L100 404M553 345L540 460M0 858L100 872L400 910L550 928M630 942L715 955M395 912L375 1086M0 1043L195 1068L370 1086M560 660L800 690L905 702"],
    ["t", 8, "M430 718L740 762L1040 800M0 662L125 676"],
    ["g", 14, "M1128 222L1260 228M0 655L125 668M430 710L740 752L1040 793M1050 800L1260 803M740 765L700 1086M1040 805L1030 1086M700 1045L1040 1083"],
    ["g", 9, "M75 80L42 290M647 155L625 340M865 182L840 370M1118 218L1095 415L1075 570L1055 700L1040 795M35 405L42 460M823 505L805 620M800 690L790 755M935 520L910 700M105 680L95 780M440 720L430 830M100 875L80 1045M505 930L485 1086M625 955L608 1080M1130 200L1260 88"],
    ["g", 8, "M0 100L78 76L1118 213M0 258L245 290L425 312L560 330M170 280L158 390M15 595L130 608M135 577L228 588M348 603L440 615M450 573L553 587M438 650L550 663M105 740L205 752L330 768L435 780M0 785L85 797M78 800L72 865M570 475L560 525"],
    ["g", 7, "M0 282L40 287M0 455L45 462L450 515L560 525M35 525L135 538M450 588L553 600M370 705L362 768"],
    ["o", 3, "M225 487L450 517M1122 230L1045 790"],
    ["n", 9, "M165 392L225 397M1000 510L1075 516"],
    ["m", 8, "M598 752L587 835M577 898L573 925M55 1060v26"],
    ["d", 9, "M145 538L235 547M355 565L450 573M577 335L620 341M230 600L222 680M342 630L336 680"],
    ["d", 4, "M35 533L135 545M450 580L553 593"],
    ["o", 20, "M137 592L228 602M348 620L435 632"],
    ["v", 3, "M137 588L228 598M348 618L435 628"],
    ["r", 3, "M133 660L218 672M340 688L425 698M103 550L100 603M425 640L418 700"],
    ["v", 16, "M350 703v44M93 800v40"],
    ["k", 0, "M340 745h22v22h-22zM77 835h22v28h-22z"],
    ["w", 11, "M40 305L32 378M107 404h32M620 360L608 452M838 400L828 480M1000 408L990 490M225 430L220 470M377 460L373 490M147 480L143 532M37 490L28 575M137 560L130 660M236 560L231 600M453 520L442 610L432 695M348 578L345 610M560 555L551 650M808 630L802 680M210 685L207 735M337 715L332 755M107 815v40M403 850L398 895M568 933L610 937M247 920L228 1050"],
    ["w", 7, "M19 598L14 635M150 677L195 681M546 668L543 705M358 703L400 708M905 712L903 740"],
    ["r", 12, "M41 298v9M622 352v11M608 450v15M827 478v15M1000 400v9M37 475v13M138 548v12M562 543v14M246 905v18M228 1048v8"],
    ["p", 14, "M70 76h16M264 102h15M438 125h15M640 152h15M857 180h15M1108 215h18M42 285v15M32 375v32M92 403h14M138 407H156V390H172M213 399h22M228 395v22M552 348V334H577M617 342h27M622 340v18M548 375v15M606 463v15M842 365L838 405M824 490v18M987 388h23M1000 385v15M990 490v35M985 507h25M1085 415h20M1062 520h22M1079 515v20M1073 563v15M35 463h20M42 458v15M130 472h22M212 480h15M357 500H377M373 487v18M375 462V443H405V425M450 515h24M550 525h18M560 520v20M142 535v15M220 548h20M236 545v15M230 598v15M350 565h20M350 560v20M428 573h22M446 570v18M342 612v15M550 658h17M809 612v18M802 680v15M795 692h25M895 704h20M906 700v20M904 738v15M883 785L885 750L940 755L936 792M522 736h18M1047 772v30M1056 695v14M5 580h20M10 666h22M120 677h18M130 655v25M215 675v18M200 680h20M207 735v18M335 675v40M332 700h25M332 750v18M320 766h15M412 713h20M420 700v20M95 768v30M97 800h20M110 795v20M105 855v15M78 869h30M430 810v30M400 842h32M405 835v15M398 893v20M395 912h28M550 930h16M612 940h20M626 935v25M248 885v20M190 1070L262 1078M228 1055v18M485 1079v7M608 1074v12"],
    ["p", 20, "M730 762h18M1027 795h22M692 1046h19M1020 1086h20"]
  ] },
  { x: 1180, y: 155, parts: [
    ["o", 5, "M964 240V220M1000 245V222M964 220H1000"],
    ["v", 3, "M966 232H998"],
    ["k", 0, "M848 665L935 675L922 745L838 735zM1055 695L1145 705L1138 770L1045 762zM1165 620L1258 635L1238 785L1145 778zM1050 800L1100 805L1097 832L1045 828z"],
    ["g", 12, "M380 283L680 320M765 230L750 350M320 412L740 462M318 420L290 650M440 603L720 642M740 728L820 738M810 740L800 830M1147 780L1135 880M1240 810L1285 900M750 462L800 465M1222 400L1212 520M810 803L1030 830"],
    ["t", 7, "M290 673L720 728"],
    ["g", 14, "M290 665L720 718M1235 798L1290 805"],
    ["g", 18, "M425 690L398 900"],
    ["g", 9, "M285 672L50 880M590 205L582 298M967 255L938 465M1105 275L1072 500M448 430L428 600M748 470L742 520M855 475L848 600M1275 535L1262 590M1162 580L1155 630M0 880L50 886"],
    ["g", 8, "M387 272L590 205L1290 292M757 327L950 352L1235 388M688 344L745 350M855 538L1165 577M1078 505L1275 528M740 587L845 600M740 600L840 611M730 666L830 679M845 640L935 650M1055 668L1148 680M1030 830L1135 845M1150 780L1240 793M1106 780L1100 835M1265 722h25"],
    ["m", 8, "M703 730L680 900"],
    ["o", 3, "M320 676L500 700M855 544L1160 582"],
    ["d", 11, "M875 457L920 460M1248 393h40"],
    ["d", 8, "M855 602L940 608M1060 628L1150 637M932 680L925 740M1047 690L1040 740"],
    ["y", 8, "M977 548L983 493L1068 502M1078 485L1142 492M600 632L592 692"],
    ["y", 5, "M540 611L605 620"],
    ["o", 20, "M852 658L938 668M1055 685L1143 695"],
    ["v", 3, "M855 655L932 664M1058 680L1140 689"],
    ["v", 14, "M1172 585v40M1260 590v45M1053 770v32"],
    ["r", 4, "M1090 700L1083 765M1048 802H1098M1076 795v35"],
    ["w", 11, "M370 292L360 400M463 300L450 402M680 345L670 432M747 370L738 438M810 467h32M933 478L927 530M742 550L730 630M1073 520L1070 550M843 625L832 735M940 625L936 645M917 755L912 795M1052 640L1048 665M1152 650L1138 770M1040 780L1035 812M1266 620L1255 710M1248 735L1242 780M1228 402L1220 458M1281 450L1277 510M295 575L290 635M425 620v20M814 870L812 900M1060 768L1118 772M1180 580L1253 588"],
    ["w", 8, "M757 527L835 535M727 655L721 700M858 741L900 745"],
    ["r", 12, "M449 403v15M681 338v7M668 432v15M747 360v10M742 535v15M843 612v14M1218 458v8M1277 508v14M1266 605v15M297 567v10M721 698v6"],
    ["p", 14, "M583 206h14M757 228h14M961 254h15M1098 272h15M368 280h22M374 275v20M448 290h22M463 288v14M313 414H358M318 410v27M358 400v18M448 417v16M660 318h30M682 316v22M666 447v15M748 347v18M796 466h15M843 470H862V450M862 455H878M920 462h22M936 460v20M742 524h20M835 538h20M918 538h15M1073 500v15M1068 550v15M1223 392h25M1227 388v18M1217 463v12M1275 522v15M1160 580h20M1253 592h14M422 606h22M427 602v18M390 680L393 652L455 657L452 685M425 640v12M708 642h24M728 630v25M840 602h18M925 610h20M940 607v20M850 648v22M820 740h24M833 735v12M902 745h22M920 740v15M912 795v22M1052 630h20M1055 625v20M1135 637h20M1048 676v20M1040 740v20M1038 765h20M1122 775h30M1035 815v18M1250 722h20M800 830v35M797 860h26M1135 875v25M1110 898h25M297 572v10"],
    ["p", 20, "M281 660h22M728 727h18M728 463h18M1227 795h20M383 670h14M716 728h22"]
  ] },
  { x: 1180, y: 440, parts: [
    ["t", 6, "M700 262L1165 322M1190 400L1290 410"],
    ["g", 16, "M405 0L365 290L318 625L282 906M660 325L645 668L615 906M1020 375L972 710L950 906M1296 410L1300 755L1280 906M0 621L318 625L645 668L972 710L1300 755L1380 765"],
    ["g", 13, "M48 42L395 58L575 52M650 62L1100 120L1260 138M690 252L1190 315M15 240L365 285L545 305L655 318M1258 0L1328 145M1180 390L1290 402"],
    ["g", 10, "M40 45L12 240L0 380M573 82L690 93M573 85L560 185M697 70L675 245M806 85L785 255M953 100L945 160M1103 122L1078 300M1212 138L1187 310M1330 165L1312 290M1138 0L1134 30"],
    ["g", 24, "M1325 155L1380 165M1295 403L1380 412"],
    ["m", 8, "M685 0L678 62M1303 0L1283 135M1343 0L1333 70L1290 65M1312 305L1303 390"],
    ["o", 3, "M42 60L5 380"],
    ["v", 18, "M585 60v20M640 76L688 82"],
    ["w", 12, "M597 53L640 57M812 25v40M555 210L547 285M671 265L667 297M943 185L935 265M1108 62L1105 100M1185 332L1182 372M1272 141L1306 145"],
    ["r", 12, "M557 198v12M944 172v13M1312 298v12"],
    ["p", 14, "M572 55h24M578 45v28M640 60h16M790 5h30M817 0v25M783 77h30M808 65v18M558 185v14M546 282v20M668 250h28M673 245v20M666 295v20M946 160v14M895 278L967 288M933 265v15M1135 20v30M1107 47h32M1110 42v20M1100 120h28M1104 102v18M1165 315h28M1186 312v20M1182 372v20M1172 390h24M1255 138h16M1308 146h20M1301 385v20M1313 283v15M1287 63h12M355 289h20"],
    ["p", 20, "M27 36h20M5 235h20M384 58h21M538 305h23M648 318h22M1010 366h21M1317 157h20M1281 403h22M308 626h21M636 668h20M963 711h20M1290 755h20"]
  ] }
];

class ModelView extends HTMLElement {
  connectedCallback() {
    this.attachShadow({ mode: "open" });
    this.shadowRoot.innerHTML = `
      <svg class="plan" viewBox="434 161 1206 581" preserveAspectRatio="xMinYMin slice" role="img" aria-label="模型">
        <defs>
          <clipPath id="floor"><path d="M663 462L845 399L1197 447L1275 379L1285 290L1297 288L1302 243L1378 219L1640 253V742H626z"/></clipPath>
        </defs>
        <path class="axis" d="M575 162L500 733M685 162L609 742M797 162L762 427M907 162L877 403M1018 162L985 417M1129 162L1094 432M1238 180L1204 438M1347 197L1343 229M1456 210L1453 229M1566 225L1562 243M576 169L1299 264M558 294L1262 387M548 366L835 404M538 442L667 459M523 555L647 571M509 664L631 679M1167 172L1607 230"/>
        <path class="axis dim" d="M1040 180L1360 223"/>
        <path class="ext" d="M534 162L497 440L460 727M555 162L518 440L480 730M513 161L576 169M503 287L558 294M495 359L548 366M482 435L538 442M465 547L523 555M471 657L509 664M1228 161L1607 209M1383 161L1607 189M1349 178L1347 197M1461 178L1456 210M1572 165L1566 225M434 706L440 696M434 717L445 727"/>
        ${BUBBLES.map(([x, y]) => `<circle class="ext" cx="${x}" cy="${y}" r="11.500"/>`).join("")}
        ${BUBBLES.map(([x, y, t]) => `<text x="${x}" y="${y + 6}">${t}</text>`).join("")}
        <text x="969" y="179">1.1</text>
        ${DIMS.map(([x, y, a, t]) => `<text class="num" transform="translate(${x} ${y}) rotate(${a})" y="6">${t}</text>`).join("")}
        <text x="1609" y="206">8</text><text x="1608" y="238">D</text>
        <path fill="#656565" d="M663 462L845 399L1197 447L1275 379L1285 290L1297 288L1302 243L1378 219L1640 253V742H626z"/>
        <path class="wall shade" d="M664 465L845 403L1196 449M1304 246L1378 223L1640 256"/>
        <path class="wall" d="M663 462L845 400L1197 447M1285 289L1297 289L1303 243L1378 220L1640 253"/>
        ${SHEETS.map((s) => `
          <g transform="translate(${s.x} ${s.y}) scale(.3333)">
            ${s.parts.map(([c, w, d]) => `<path class="${c}" stroke-width="${w}" d="${d}"/>`).join("")}
          </g>
        `).join("")}
        <path class="wall shade" d="M1373 445L1284 433M1271 531L1360 541"/>
        <path class="wall" d="M1373 455L1374 442L1284 430L1271 530L1361 539"/>
        <path class="road" clip-path="url(#floor)" d="M1228 395L1190 688L1105 677L1096 744M1211 560L1636 615V600M630 714L681 720L677 744"/>
      </svg>
      <p class="warn">您的计算机内存不足，请及时保存工程以防内存不足发生内存溢出等风险，可通过关闭其他应用程序或者升级电脑内存来提升计算机可用内存。（计算机可用内存&gt;200M时，此提示会自动消失）</p>
      <button class="fold left" aria-label="收起左侧"><svg width="6" height="8"><path d="M5 0L1 4l4 4"/></svg></button>
      <button class="fold right" aria-label="收起右侧"><svg width="6" height="8"><path d="M1 0l4 4-4 4"/></svg></button>
      <div class="views">
        <button aria-label="动态观察"><svg viewBox="0 0 22 22"><circle cx="11" cy="11" r="9"/><path class="a" d="M17 4c4-3 5 0 1 4-4 5-13 9-16 7-2-2 0-5 3-7"/></svg></button>
        <button class="flat" aria-label="二维"><span>2D</span></button>
        <button aria-label="视角"><svg viewBox="0 0 22 22"><path d="M2 6h14v15H2zM16 6l4-4v14l-4 5"/><path class="a" d="M2 6l4-4h14l-4 4z"/></svg></button>
        <i></i>
        <button aria-label="显示方式"><svg viewBox="0 0 22 22"><path class="a" fill="#cfe2fb" d="M2 6l4-4h14v14l-4 5H2z"/><path class="a" d="M2 6h14v15M16 6l4-4"/></svg></button>
        <i></i>
        <button aria-label="全屏"><svg viewBox="0 0 22 22"><path d="M2 8V2h6M14 2h6v6M20 14v6h-6M8 20H2v-6"/></svg></button>
        <button class="low" aria-label="局部三维"><svg viewBox="0 0 22 22"><path stroke-dasharray="3 2" d="M2 2h18v18H2z"/><path class="a" d="M11 5l5 3v6l-5 3-5-3V8zM6 8l5 3 5-3M11 11v6"/></svg></button>
        <hr>
        <button aria-label="显示设置"><svg viewBox="0 0 22 22"><path d="M10 20H2V2h18v10M5 7h2M9 7h8M5 11h2M9 11h6M5 15h2"/><path class="a" d="M12 17q4-5 8 0-4 5-8 0z"/><circle class="a" cx="16" cy="17" r="1"/></svg></button>
      </div>
      <style>
        :host {
          background: #000;
          display: block;
          flex: 1;
          min-width: 0;
          overflow: hidden;
          position: relative;
        }

        .plan {
          display: block;
          height: 100%;
          width: 100%;
        }

        .plan path, .plan circle {
          stroke-linejoin: miter;
        }

        .axis, .ext, .wall, .road {
          fill: none;
        }

        .axis {
          stroke: #ff0000;
        }

        .axis.dim {
          stroke: #700000;
        }

        .ext {
          stroke: #008a00;
        }

        circle.ext {
          stroke-dasharray: 5 1;
        }

        .wall {
          stroke: #8c8c8c;
          stroke-width: 2;
        }

        .wall.shade {
          stroke: #404040;
          stroke-width: 3;
        }

        .road {
          stroke: #3f566e;
          stroke-width: 10;
        }

        text {
          fill: #fff;
          font: 17px "Noto Sans CJK SC", sans-serif;
          text-anchor: middle;
        }

        .num {
          font-size: 18px;
        }

        g path {
          fill: none;
        }

        .g { stroke: #2cdc2c; }
        .n { stroke: #00ff00; }
        .m { stroke: #3cc050; }
        .d { stroke: #005000; }
        .t { stroke: #1c5a1c; }
        .o { stroke: #77700a; }
        .e { stroke: #969696; }
        .w { stroke: #f6f6f6; }
        .r { stroke: #ff0a0a; }
        .p { stroke: #8800ff; }
        .v { stroke: #38008a; }
        .y { stroke: #ffff20; }
        g .k { fill: #000; }
        g .f { fill: #656565; }

        .warn {
          color: #333;
          left: 10px;
          line-height: 17px;
          margin: 0;
          position: absolute;
          text-spacing-trim: space-all;
          top: 6px;
          width: 373px;
        }

        .fold {
          align-items: center;
          background: #4a4a4a;
          border: 0;
          display: flex;
          height: 62px;
          justify-content: center;
          padding: 0;
          position: absolute;
          top: 380px;
          width: 16px;
        }

        .fold svg {
          fill: none;
          stroke: #aaa;
        }

        .left {
          border-radius: 0 4px 4px 0;
          left: 0;
        }

        .right {
          border-radius: 4px 0 0 4px;
          right: 0;
        }

        .views {
          align-items: center;
          background: #fff;
          border-radius: 3px;
          box-sizing: border-box;
          display: flex;
          flex-direction: column;
          padding: 12px 0 11px;
          position: absolute;
          right: 0;
          top: 1px;
          width: 33px;
        }

        .views button {
          background: none;
          border: 0;
          height: 22px;
          margin-bottom: 7px;
          padding: 0;
          width: 22px;
        }

        .views svg {
          display: block;
          fill: none;
          height: 22px;
          stroke: #46505f;
          stroke-width: 1.2;
        }

        .views .a {
          stroke: #1f74e8;
        }

        .views .flat {
          align-items: end;
          border: 1px solid #46505f;
          border-radius: 2px;
          color: #1f74e8;
          display: flex;
          font: bold 8px/10px "Noto Sans", sans-serif;
          height: 19px;
          margin-bottom: 8px;
          padding: 0 2px;
          width: 19px;
        }

        i {
          border: 4px solid transparent;
          border-bottom: 0;
          border-top-color: #46505f;
          margin-bottom: 6px;
        }

        .views .low {
          margin-bottom: 6px;
        }

        hr {
          border: 0;
          border-top: 1px solid #46505f;
          margin: 0 0 6px;
          width: 23px;
        }

        .views button:last-child {
          margin: 0;
        }
      </style>
    `;
  }
}

customElements.define("model-view", ModelView);

// display-settings.js

class DisplaySettings extends HTMLElement {
  connectedCallback() {
    // 2 = partly shown, 1 = shown, 0 = hidden
    var rows = [["所有构件", 2], ["施工段", 2], ["轴线", 1], ["柱", 2], ["墙", 2], ["门窗洞", 0], ["梁", 1], ["板", 2], ["装配式", 2],
      ["空心楼盖", 2], ["楼梯", 0], ["装修", 2], ["基坑支护", 0], ["土方", 0], ["基础", 2], ["其它", 2], ["自定义", 2]];
    this.attachShadow({ mode: "open" });
    this.shadowRoot.innerHTML = `
      <div class="tabs">
        <button class="on">图元显示</button>
        <button>楼层显示</button>
      </div>
      <table>
        <thead><tr><th class="name">图层构件</th><th class="sel">显示图元</th><th class="cut">显示</th></tr></thead>
        <tbody>
          ${rows.map(([name, state], n) => `
            <tr>
              <td class="${n ? "sub" : "top"}"><button class="exp" aria-label="展开${name}"></button><label for="c${n}">${name}</label></td>
              <td class="chk${name == "其它" ? " cur" : ""}"><input id="c${n}" type="checkbox" data-state="${state}"></td>
              <td class="chk"><input type="checkbox" aria-label="${name}"></td>
            </tr>
          `).join("")}
        </tbody>
      </table>
      <style>
        :host {
          display: block;
          padding: 2px 0 0 2px;
        }

        .tabs {
          align-items: end;
          border-bottom: 1px solid #bfc3cc;
          display: flex;
          gap: 3px;
          height: 24px;
        }

        .tabs button {
          background: #dcdcdc;
          border: 0;
          border-radius: 3px 3px 0 0;
          color: #555;
          font: inherit;
          height: 21px;
          padding: 0 6px;
        }

        .tabs .on {
          background: #fff;
          border: 1px solid #bfc3cc;
          border-bottom: 0;
          color: #1f74e8;
          height: 24px;
          margin-bottom: -1px;
        }

        table {
          border-collapse: collapse;
          margin-top: 2px;
          table-layout: fixed;
          width: 269px;
        }

        th, td {
          border: 1px solid #dadada;
          box-sizing: border-box;
          font-weight: normal;
          height: 21px;
          line-height: 16px;
          padding: 0;
        }

        .name {
          width: 141px;
        }

        .sel {
          background: #80b8f8;
          color: #fff;
          font-weight: bold;
          width: 63px;
        }

        .cut {
          padding-left: 8px;
          text-align: left;
        }

        .top {
          padding-left: 2px;
        }

        .sub {
          padding-left: 12px;
        }

        .exp {
          background: linear-gradient(#555, #555) center / 5px 1px no-repeat, #fff;
          border: 1px solid #888;
          border-radius: 2px;
          height: 13px;
          margin: 0 6px 0 0;
          padding: 0;
          vertical-align: middle;
          width: 13px;
        }

        .sub .exp {
          background: linear-gradient(#555, #555) center / 5px 1px no-repeat, linear-gradient(#555, #555) center / 1px 5px no-repeat, #fff;
        }

        .chk {
          text-align: center;
        }

        .chk input {
          appearance: none;
          background: #fff;
          border: 1px solid #888;
          border-radius: 2px;
          box-sizing: border-box;
          display: block;
          height: 14px;
          margin: 0 auto;
          width: 14px;
        }

        .chk input:indeterminate {
          background: linear-gradient(#8fc4fb, #8fc4fb) center / 8px 8px no-repeat, linear-gradient(#3f8de8, #3f8de8) center / 10px 10px no-repeat, #fff;
        }

        .chk input:checked {
          background: #2b7de1;
          border-color: #2b7de1;
        }

        .chk input:checked::after {
          border: solid #fff;
          border-width: 0 2px 2px 0;
          content: "";
          display: block;
          height: 6px;
          margin: 1px 0 0 4px;
          transform: rotate(45deg);
          width: 3px;
        }

        .cur {
          outline: 2px solid #777;
          outline-offset: -1px;
        }
      </style>
    `;
    this.shadowRoot.querySelectorAll("input[data-state]").forEach((box) => {
      box.checked = box.dataset.state == "1";
      box.indeterminate = box.dataset.state == "2";
    });
  }
}

customElements.define("display-settings", DisplaySettings);

// note-arrows.js

class NoteArrows extends HTMLElement {
  connectedCallback() {
    this.attachShadow({ mode: "open" });
    this.shadowRoot.innerHTML = `
      <svg width="1700" height="700" aria-hidden="true">
        <defs>
          <linearGradient id="a" gradientUnits="userSpaceOnUse" x1="375" y1="246" x2="398" y2="272"><stop stop-color="#ff2114"/><stop offset="1" stop-color="#ff2114" stop-opacity=".3"/></linearGradient>
          <linearGradient id="b" gradientUnits="userSpaceOnUse" x1="1130" y1="368" x2="1075" y2="397"><stop stop-color="#ff2114"/><stop offset="1" stop-color="#ff2114" stop-opacity=".3"/></linearGradient>
          <linearGradient id="c" gradientUnits="userSpaceOnUse" x1="450" y1="475" x2="502" y2="456"><stop stop-color="#ff2114"/><stop offset="1" stop-color="#ff2114" stop-opacity=".3"/></linearGradient>
        </defs>
        <path fill="url(#a)" d="M173 18l18 6-7 3L399 273 397 273 179 32l-3 6z"/>
        <path fill="url(#b)" d="M1623 106l-10 16-2-6L1075 398V397l534-287-6-5z"/>
        <path fill="url(#c)" d="M77 611l14-15 0 7L502 456V457L94 610l3 4z"/>
      </svg>
      <style>
        :host {
          display: block;
          left: 0;
          pointer-events: none;
          position: absolute;
          top: 0;
        }

        svg {
          display: block;
        }
      </style>
    `;
  }
}

customElements.define("note-arrows", NoteArrows);

// model-app.js

class ModelApp extends HTMLElement {
  connectedCallback() {
    this.attachShadow({ mode: "open" });
    this.shadowRoot.innerHTML = `
      <menu-bar></menu-bar>
      <ribbon-bar></ribbon-bar>
      <filter-bar></filter-bar>
      <main>
        <dock-panel class="nav" title="导航栏"><nav-list></nav-list></dock-panel>
        <div class="side">
          <dock-panel class="list" tabs="构件列表,图纸管理"><component-list></component-list></dock-panel>
          <dock-panel class="props" tabs="属性列表,图层管理"><property-grid></property-grid></dock-panel>
        </div>
        <model-view></model-view>
        <dock-panel class="show" title="显示设置" fixed><display-settings></display-settings></dock-panel>
      </main>
      <note-arrows></note-arrows>
      <style>
        :host {
          display: flex;
          flex-direction: column;
          height: 100vh;
          overflow: hidden;
          position: relative;
        }

        main {
          display: flex;
          flex: 1;
          min-height: 0;
        }

        .nav {
          border-left: 0;
          flex: 0 0 123px;
        }

        .side {
          display: flex;
          flex: 0 0 303px;
          flex-direction: column;
          gap: 4px;
          margin: 0 4px;
        }

        .list {
          flex: 0 1 391px;
        }

        .props {
          flex: 1;
        }

        .show {
          border-right: 0;
          flex: 0 0 235px;
          margin-left: 4px;
        }
      </style>
    `;
  }
}

customElements.define("model-app", ModelApp);
</script>
</body>
</html>
